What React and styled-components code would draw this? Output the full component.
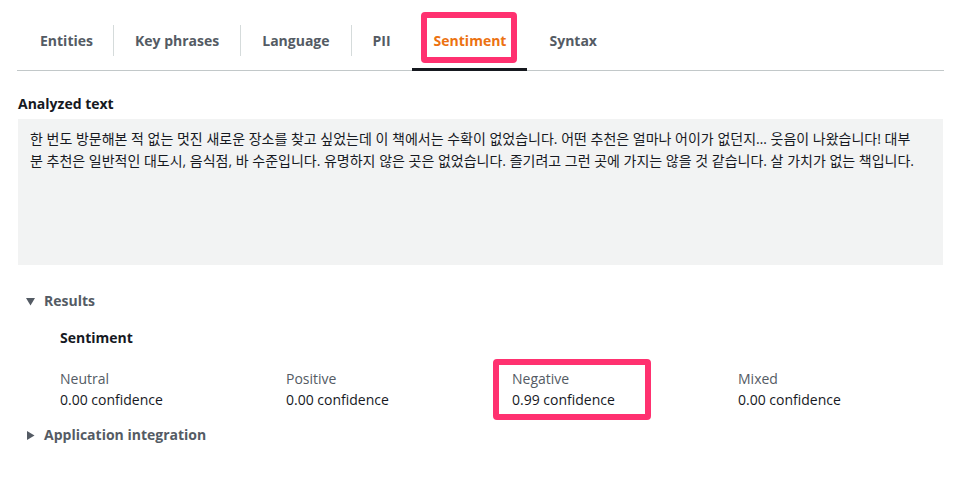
import React from "react";
import styled, { createGlobalStyle } from "styled-components";

const GlobalStyle = createGlobalStyle`
  body {
    margin: 0;
    background: #ffffff;
    font-family: "Open Sans", "Noto Sans CJK KR", sans-serif;
    color: #16191f;
  }
`;

const COLORS = {
  text: "#16191f",
  muted: "#545b64",
  orange: "#ec7211",
  pink: "#ff3170",
  line: "#c2c8c9",
  sep: "#d5dbdb",
  well: "#f2f3f3",
};

const Page = styled.div`
  width: 960px;
  height: 477px;
  overflow: hidden;
  padding: 0 17px 0 17px;
  box-sizing: border-box;
`;

const TabBar = styled.nav`
  display: flex;
  height: 71px;
  border-bottom: 1px solid ${COLORS.line};
  box-sizing: border-box;
  width: 927px;
`;

const Tab = styled.div`
  position: relative;
  display: flex;
  align-items: center;
  padding: 13px 21px 0 22px;
  font-size: 14px;
  font-weight: 700;
  color: ${(p) => (p.active ? COLORS.orange : COLORS.muted)};
  border-bottom: ${(p) => (p.active ? `3px solid ${COLORS.text}` : "3px solid transparent")};
  margin-bottom: -1px;

  &:first-child {
    padding-left: 23px;
    padding-right: 20px;
  }

  & + &::before {
    content: "";
    position: absolute;
    left: 0;
    top: 25px;
    height: 31px;
    width: 1px;
    background: ${COLORS.sep};
  }
`;

const Highlight = styled.span`
  position: absolute;
  left: ${(p) => p.left}px;
  top: ${(p) => p.top}px;
  width: ${(p) => p.w}px;
  height: ${(p) => p.h}px;
  border: 6px solid ${COLORS.pink};
  border-radius: 4px;
  box-sizing: border-box;
  pointer-events: none;
`;

const Label = styled.div`
  font-size: 14px;
  font-weight: 700;
  margin: 23px 0 0 1px;
  line-height: 20px;
`;

const Well = styled.div`
  margin: 5px 0 0 1px;
  width: 925px;
  height: 146px;
  background: ${COLORS.well};
  box-sizing: border-box;
  padding: 9px 12px;
`;

const Analyzed = styled.p`
  margin: 0;
  max-width: 889px;
  font-size: 14px;
  line-height: 22px;
  color: ${COLORS.text};
`;

const Expander = styled.div`
  display: flex;
  align-items: center;
  gap: 8px;
  margin: ${(p) => p.mt}px 0 0 8px;
  font-size: 14px;
  font-weight: 700;
  color: ${COLORS.muted};
  line-height: 20px;
`;

const Caret = ({ open }) => (
  <svg width="11" height="11" viewBox="0 0 11 11">
    {open ? (
      <polygon points="1,2 10,2 5.5,9.5" fill={COLORS.muted} />
    ) : (
      <polygon points="2,1 2,10 9.5,5.5" fill={COLORS.muted} />
    )}
  </svg>
);

const ResultBody = styled.div`
  padding-left: 43px;
`;

const SubTitle = styled.div`
  font-size: 14px;
  font-weight: 700;
  color: ${COLORS.text};
  margin-top: 17px;
  line-height: 20px;
`;

const Grid = styled.div`
  display: grid;
  grid-template-columns: repeat(4, 226px);
  margin-top: 20px;
`;

const Cell = styled.div`
  position: relative;
  font-size: 14px;
  line-height: 21px;
`;

const CellLabel = styled.div`
  color: ${COLORS.muted};
`;

const CellValue = styled.div`
  color: ${COLORS.text};
`;

const tabs = ["Entities", "Key phrases", "Language", "PII", "Sentiment", "Syntax"];

const results = [
  { label: "Neutral", value: "0.00" },
  { label: "Positive", value: "0.00" },
  { label: "Negative", value: "0.99", marked: true },
  { label: "Mixed", value: "0.00" },
];

export default function App() {
  return (
    <Page>
      <GlobalStyle />
      <TabBar>
        {tabs.map((t) => (
          <Tab key={t} active={t === "Sentiment"}>
            {t}
            {t === "Sentiment" && <Highlight left={9} top={12} w={96} h={51} />}
          </Tab>
        ))}
      </TabBar>

      <Label>Analyzed text</Label>
      <Well>
        <Analyzed>
          한 번도 방문해본 적 없는 멋진 새로운 장소를 찾고 싶었는데 이 책에서는 수확이 없었습니다. 어떤 추천은 얼마나 어이가 없던지… 웃음이 나왔습니다! 대부분 추천은 일반적인 대도시, 음식점, 바 수준입니다. 유명하지 않은 곳은 없었습니다. 즐기려고 그런 곳에 가지는 않을 것 같습니다. 살 가치가 없는 책입니다.
        </Analyzed>
      </Well>

      <Expander mt={26}>
        <Caret open />
        Results
      </Expander>
      <ResultBody>
        <SubTitle>Sentiment</SubTitle>
        <Grid>
          {results.map((r) => (
            <Cell key={r.label}>
              <CellLabel>{r.label}</CellLabel>
              <CellValue>{r.value} confidence</CellValue>
              {r.marked && <Highlight left={-19} top={-9} w={158} h={61} />}
            </Cell>
          ))}
        </Grid>
      </ResultBody>

      <Expander mt={15}>
        <Caret />
        Application integration
      </Expander>
    </Page>
  );
}
